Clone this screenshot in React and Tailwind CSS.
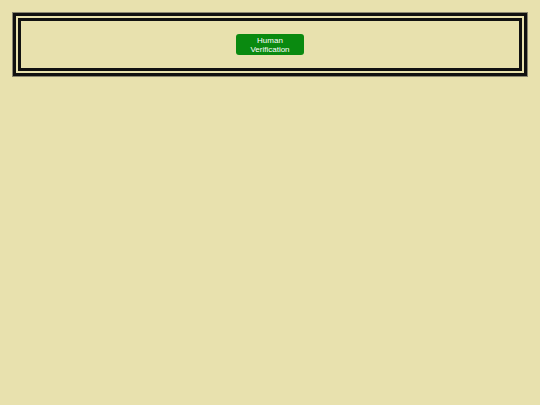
export default function App() {
  return (
    <div className="min-h-screen bg-[#e8e1ae] pt-[13px] px-[13px]" style={{ fontFamily: '"Liberation Sans", Arial, sans-serif' }}>
      {/* framed header box */}
      <div className="border-[3px] border-[#111] p-[2px] shadow-[0_0_0_1px_#8a8670]">
        <div className="border-[3px] border-[#111] h-[53px] flex items-center justify-center">
          <button className="w-[68px] h-[21px] rounded-[3px] bg-[#0a8a10] text-white text-[8px] leading-[9px] flex items-center justify-center">
            Human<br />Verification
          </button>
        </div>
      </div>
    </div>
  )
}
